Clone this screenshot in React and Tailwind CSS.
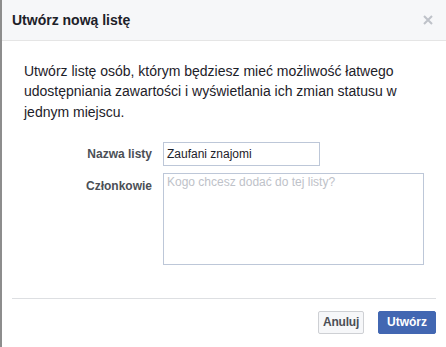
const CloseIcon = () => (
  <svg width="10" height="10" viewBox="0 0 10 10" className="block">
    <path d="M1 1 L9 9 M9 1 L1 9" stroke="#bec2c9" strokeWidth="2" />
  </svg>
);

export default function App() {
  return (
    <div
      className="w-[446px] h-[347px] overflow-hidden bg-white border-l-2 border-[#8d8d8d] text-[#1d2129]"
      style={{ fontFamily: '"Liberation Sans", Arial, Helvetica, sans-serif' }}
    >
      {/* Header */}
      <div className="h-[41px] flex items-center justify-between pl-[10px] pr-[13px] bg-[#f6f7f9] border-b border-[#e5e5e5]">
        <h2 className="text-[14px] font-bold leading-[18px] text-[#1d2129]">
          Utwórz nową listę
        </h2>
        <CloseIcon />
      </div>

      {/* Body */}
      <div className="pt-[20px] pl-[22px] pr-[12px]">
        <p className="text-[14px] leading-[20.3px] text-[#1d2129]">
          Utwórz listę osób, którym będziesz mieć możliwość łatwego
          udostępniania zawartości i wyświetlania ich zmian statusu w
          jednym miejscu.
        </p>

        <div className="mt-[20px] flex flex-col gap-[7px]">
          <div className="flex items-center">
            <label className="w-[139px] pr-[11px] text-right text-[12px] font-bold leading-[14px] text-[#4b4f56]">
              Nazwa listy
            </label>
            <div className="w-[157px] h-[24px] flex items-center px-[3px] border border-[#bdc7d8] text-[12px] leading-[14px] text-[#1d2129]">
              Zaufani znajomi
            </div>
          </div>
          <div className="flex items-start">
            <label className="w-[139px] pr-[11px] pt-[6px] text-right text-[12px] font-bold leading-[14px] text-[#4b4f56]">
              Członkowie
            </label>
            <div className="w-[261px] h-[92px] px-[3px] pt-[1px] border border-[#bdc7d8] text-[12px] leading-[14px] text-[#bec2c9]">
              Kogo chcesz dodać do tej listy?
            </div>
          </div>
        </div>
      </div>

      {/* Footer */}
      <div className="mx-[10px] mt-[33px] pt-[12px] border-t border-[#dddfe2] flex justify-end gap-[14px]">
        <button className="h-[23px] w-[46px] px-0 bg-[#f6f7f9] border border-[#ced0d4] rounded-[2px] text-[12px] font-bold tracking-[-0.2px] text-[#4b4f56]">
          Anuluj
        </button>
        <button className="h-[23px] px-[8px] bg-[#4267b2] border border-[#4267b2] rounded-[2px] text-[12px] font-bold text-white">
          Utwórz
        </button>
      </div>
    </div>
  );
}
